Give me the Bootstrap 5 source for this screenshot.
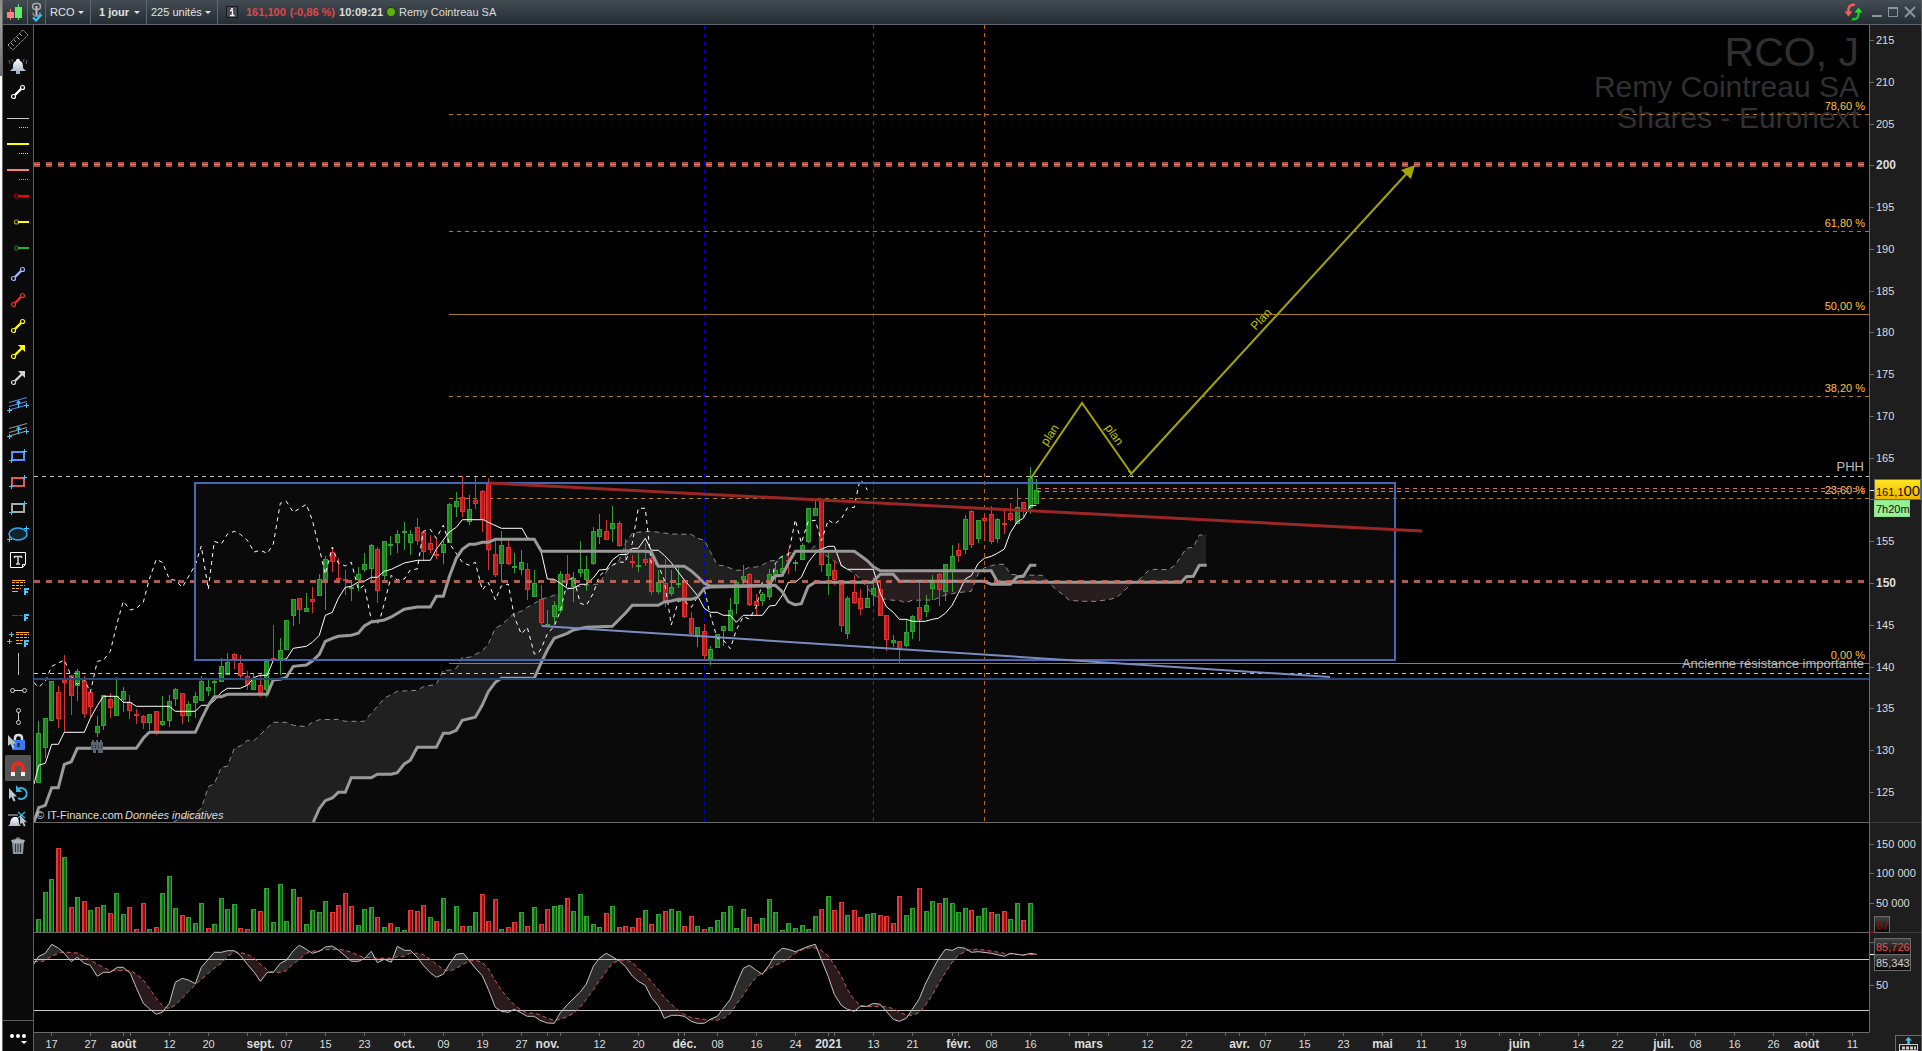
<!DOCTYPE html>
<html lang="fr">
<head>
<meta charset="utf-8">
<meta name="viewport" content="width=device-width, initial-scale=1">
<title>RCO, J - Remy Cointreau SA</title>
<link href="https://cdn.jsdelivr.net/npm/bootstrap@5.3.0/dist/css/bootstrap.min.css" rel="stylesheet">
<style>
  body { background: #fff; color: #dcdcdc; font: 11px/14px "Liberation Sans", Arial, sans-serif; }
  .desk-edge { width: 2px; background: linear-gradient(#8a8a8a, #a0a0a0 20px, #6e6e6e 76px, #fff 76px); }
  .chart-window { background: #000; border-left: 1px solid #666; border-right: 1px solid #5c5c5c; min-width: 0; }
  .title-bar { height: 25px; background: linear-gradient(#434c53, #252d33); border-bottom: 1px solid #5d676d; }
  .title-bar .cell { height: 24px; border-right: 1px solid #5d676d; }
  .style-btn { width: 25px; }
  .link-btn { width: 18px; }
  .title-bar select { appearance: none; background: transparent; border: 0; color: #e2e2e2; font: inherit; padding: 0; outline: 0; }
  .title-bar option { background: #252d33; }
  .drop { padding-left: 4px; padding-right: 6px; }
  .drop::after { content: ""; border: 3px solid transparent; border-top-color: #e2e2e2; border-bottom: 0; }
  .sel-code { width: 28px; }
  .title-bar .sel-unit { width: 35px; font-weight: bold; }
  .sel-range { width: 54px; }
  .quote-down { color: #e04646; }
  .status-dot { width: 8px; height: 8px; background: #5ab40a; box-shadow: 0 0 0 1px #1e3c0a; }
  .plain-btn { background: none; border: 0; padding: 0; line-height: 0; color: inherit; }
  .tool-rail { width: 31px; background: #0a0a0a; border-right: 1px solid #5f5f5f; padding-top: 2px; }
  .tool-rail .plain-btn { width: 28px; height: 26px; margin-left: 1px; }
  .tool-rail .active-tool { background: linear-gradient(#555, #555) center / 26px 26px no-repeat; border-radius: 3px; }
  .tool-rail .rail-foot { border-top: 1px solid #5f5f5f; height: 31px; }
  .pane { border-bottom: 1px solid #6a6a6a; min-width: 0; overflow: hidden; }
  .scale-pane { width: 52px; background: #1e1e1e; border-left: 1px solid #6a6a6a; border-bottom: 1px solid #3c3c3c; }
  .scale-pane.last-pane { border-bottom-color: #1e1e1e; }
  .row-volume { height: 110px; } .row-stoch { height: 100px; } .row-dates { height: 18px; background: #1e1e1e; }
  .row-dates .pages-btn { width: 26px; border-left: 1px solid #6a6a6a; border-top: 1px solid #6a6a6a; height: 16px; margin-top: 2px; }
  svg { display: block; }
  svg text { font-family: "Liberation Sans", Arial, sans-serif; font-size: 11px; fill: #dcdcdc; }
  svg .strong-label { font-size: 12px; font-weight: bold; }
  svg .fib-label { fill: #ffc04a; }
  svg .note-label { font-size: 13px; fill: #bcbcbc; }
  svg .plan-label { fill: #c0c000; font-size: 12px; }
  svg .mark-big { font-size: 41px; fill: #303030; }
  svg .mark-mid { font-size: 30px; fill: #303030; }
  .crisp { shape-rendering: crispEdges; }
</style>
</head>
<body>
<svg width="0" height="0" class="position-absolute" aria-hidden="true">
  <defs>
    <linearGradient id="tagYellow" x2="0" y2="1"><stop stop-color="#ffe61e"/><stop offset="1" stop-color="#f0b400"/></linearGradient>
    <linearGradient id="tagDark" x2="0" y2="1"><stop stop-color="#464646"/><stop offset="1" stop-color="#050505"/></linearGradient>
    <linearGradient id="bellFill" x2="0" y2="1"><stop stop-color="#fff"/><stop offset="1" stop-color="#aebfd0"/></linearGradient>
    <linearGradient id="upBody"><stop stop-color="#2fa02f"/><stop offset="1" stop-color="#0c6e0c"/></linearGradient>
    <linearGradient id="downBody"><stop stop-color="#e03232"/><stop offset="1" stop-color="#960a0a"/></linearGradient>
    <symbol id="plus" viewBox="0 0 5 5"><path d="M2.5 0v5M0 2.5h5" stroke="#3cc8ff"/></symbol>
    <symbol id="i-seg" viewBox="0 0 28 26"><path d="M11 16l6-6" stroke="currentColor" stroke-width="2.4"/><circle cx="9.5" cy="17.5" r="2" fill="none" stroke="currentColor" stroke-width="1.2"/><circle cx="18.5" cy="8.5" r="2" fill="none" stroke="currentColor" stroke-width="1.2"/></symbol>
    <symbol id="i-arrow" viewBox="0 0 28 26"><path d="M11 16l7-7" stroke="currentColor" stroke-width="2.4"/><circle cx="9.5" cy="17.5" r="2" fill="none" stroke="currentColor" stroke-width="1.2"/><path d="M14 6h7v7z" fill="currentColor"/></symbol>
    <symbol id="i-ray" viewBox="0 0 28 26"><path d="M14 13h11" stroke="currentColor" stroke-width="2"/><circle cx="12.5" cy="13" r="2" fill="none" stroke="currentColor" stroke-opacity=".6" stroke-width="1.2"/></symbol>
    <symbol id="i-level" viewBox="0 0 28 26"><path d="M3 13h22" stroke="currentColor" stroke-width="2"/><path d="M15 22.5h9" stroke="currentColor" stroke-dasharray="1 1"/></symbol>
    <symbol id="i-channel" viewBox="0 0 28 26"><path d="M5 11.5L23 6.5M5 15.5L23 10.5M5 19L23 14" stroke="currentColor" stroke-width="1.2"/><use href="#plus" x="3" y="17" width="5" height="5"/><use href="#plus" x="20" y="12" width="5" height="5"/><path d="M14.5 17v-6M12.5 12.5l2-2.5 2 2.5" stroke="#3cc8ff" stroke-width="1.2" fill="none"/></symbol>
    <symbol id="i-rect" viewBox="0 0 28 26"><rect x="8" y="9" width="12" height="8" fill="none" stroke="currentColor" stroke-width="2"/><use href="#plus" x="5" y="15" width="5" height="5"/><use href="#plus" x="18" y="6" width="5" height="5"/></symbol>
    <symbol id="i-fib" viewBox="0 0 28 26"><path d="M8 7.5h13M8 18.5h6" stroke="#ffaa28"/><path d="M8 9.5h13M8 12.5h13M8 15.5h9" stroke="#ffaa28" stroke-dasharray="3 1"/><path d="M21 22v-6h4M21 19h3" fill="none" stroke="#3cc8ff" stroke-width="2"/></symbol>
    <symbol id="cursor" viewBox="0 0 10 14"><path d="M1 0v11l2.5-2 2 4.5 2-1-2-4h3.500z" fill="#bcc4cc"/></symbol>
  </defs>
</svg>

<div class="d-flex vh-100 overflow-hidden">
  <div class="desk-edge flex-shrink-0"></div>
  <main class="chart-window d-flex flex-column flex-fill">

    <header class="title-bar d-flex align-items-center flex-shrink-0">
      <button class="plain-btn cell style-btn" type="button" aria-label="Style du graphique">
        <svg width="24" height="24" viewBox="0 0 24 24"><path d="M7.500 9v11" stroke="#ff7878"/><rect x="4" y="12" width="7" height="6" fill="#ff8282"/><path d="M15.500 4v16" stroke="#5ae65a"/><rect x="12" y="7" width="7" height="11" fill="#64eb64"/></svg>
      </button>
      <button class="plain-btn cell link-btn" type="button" aria-label="Lier les graphiques">
        <svg width="17" height="24" viewBox="0 0 17 24" fill="none"><rect x="4.500" y="3.500" width="8" height="6" rx="3" stroke="#aaa" stroke-width="1.500"/><path d="M8.500 6v10" stroke="#c0c0c0" stroke-width="2"/><path d="M5 12.500c0 5 7 5 7 0" stroke="#8c8c8c" stroke-width="1.500"/><path d="M5 17.500l3 3 5.500-6" stroke="#32c8ff" stroke-width="2"/></svg>
      </button>
      <div class="cell drop d-flex align-items-center"><select class="sel-code" aria-label="Valeur"><option>RCO</option></select></div>
      <div class="cell drop d-flex align-items-center ps-2"><select class="sel-unit" aria-label="Unité de temps"><option>1 jour</option></select></div>
      <div class="cell drop d-flex align-items-center"><select class="sel-range" aria-label="Nombre d'unités"><option>225 unités</option></select></div>
      <button class="plain-btn ms-2" type="button" aria-label="Informations">
        <svg width="12" height="12" viewBox="0 0 12 12"><rect x=".5" y=".5" width="11" height="11" fill="#4a4a55" stroke="#17171c"/><path d="M4 4.500h2.500V9M4 9.500h4.500" stroke="#fff" fill="none" stroke-width="1.300"/><rect x="5" y="2" width="2" height="1.500" fill="#fff"/></svg>
      </button>
      <strong class="quote-down ms-2">161,100</strong>
      <strong class="quote-down ms-1">(-0,86 %)</strong>
      <strong class="ms-1">10:09:21</strong>
      <span class="status-dot rounded-circle mx-1 flex-shrink-0"></span>
      <span>Remy Cointreau SA</span>
      <div class="d-flex align-items-center ms-auto">
        <button class="plain-btn" type="button" aria-label="Actualiser"><svg width="19" height="18" viewBox="0 0 19 18"><path d="M11 2C6 1 4 4 4.500 9" fill="none" stroke="#ff5a5a" stroke-width="2.500"/><path d="M.5 8.500h8l-4 5z" fill="#ff5a5a"/><path d="M8 16c5 1 7-2 6.500-7" fill="none" stroke="#14c81e" stroke-width="2.500"/><path d="M10.500 9.500h8l-4-5z" fill="#28dc32"/></svg></button>
        <button class="plain-btn ms-2" type="button" aria-label="Réduire"><svg width="12" height="12"><path d="M1 10h10" stroke="#8c959b" stroke-width="2"/></svg></button>
        <button class="plain-btn ms-1" type="button" aria-label="Agrandir"><svg width="12" height="12"><path d="M1.500 1.500h9v9h-9z" fill="none" stroke="#8c959b"/><path d="M1 2h10" stroke="#8c959b" stroke-width="2"/></svg></button>
        <button class="plain-btn ms-1 me-1" type="button" aria-label="Fermer"><svg width="14" height="12"><path d="M2 1l10 10M12 1L2 11" stroke="#8c959b" stroke-width="2"/></svg></button>
      </div>
    </header>

    <div class="d-flex flex-fill overflow-hidden">
      <nav class="tool-rail d-flex flex-column flex-shrink-0" id="rail" aria-label="Outils de dessin"></nav>

      <section class="d-flex flex-column flex-fill overflow-hidden">
        <div class="d-flex flex-fill overflow-hidden">
          <div class="pane flex-fill"><svg id="price" width="100%" height="100%" role="img" aria-label="Cours"></svg></div>
          <div class="scale-pane flex-shrink-0"><svg id="priceScale" width="51" height="100%"></svg></div>
        </div>
        <div class="row-volume d-flex flex-shrink-0">
          <div class="pane flex-fill"><svg id="volume" width="100%" height="109" role="img" aria-label="Volume"></svg></div>
          <div class="scale-pane flex-shrink-0"><svg id="volumeScale" width="51" height="110" overflow="visible"></svg></div>
        </div>
        <div class="row-stoch d-flex flex-shrink-0">
          <div class="pane flex-fill"><svg id="stoch" width="100%" height="99" role="img" aria-label="Stochastique"></svg></div>
          <div class="scale-pane last-pane flex-shrink-0"><svg id="stochScale" width="51" height="99"></svg></div>
        </div>
        <div class="row-dates d-flex flex-shrink-0 overflow-hidden">
          <div class="flex-fill overflow-hidden"><svg id="dates" width="100%" height="18"></svg></div>
          <button class="plain-btn pages-btn flex-shrink-0" type="button" aria-label="Pages"><svg width="25" height="15"><path d="M12.500 8V3" stroke="#3cc8ff" stroke-width="2.500"/><path d="M9 4.500L12.500 1 16 4.500z" fill="#3cc8ff"/><rect x="3.500" y="8.500" width="18" height="6" fill="none" stroke="#ccc"/><path d="M6 12h14" stroke="#ccc" stroke-width="3" stroke-dasharray="3 1"/></svg></button>
        </div>
      </section>
    </div>
  </main>
</div>

<script src="https://cdn.jsdelivr.net/npm/bootstrap@5.3.0/dist/js/bootstrap.bundle.min.js"></script>
<script>
/* ---------- drawing tools ---------- */
const use = (id, color) => `<use href="#${id}" width="28" height="26" style="color:${color}"/>`;
const node = (x, y) => `<circle cx="${x}" cy="${y}" r="2" fill="none" stroke="#d2d2d2"/>`;
const tools = [
  ['Règle', '<path d="M4 18L19 3l5 5L9 23z" fill="none" stroke="#aaa" stroke-dasharray="1.500 .7"/><path d="M7 16l2.500 2.500M10 13l2 2M13 10l2.500 2.500M16 7l2 2" stroke="#aaa"/>'],
  ['Alerte', '<path d="M12 8c0-3 4-3 4 0 3 1 3 4 3 7l3 3H6l3-3c0-3 0-6 3-7z" fill="url(#bellFill)"/><rect x="12" y="18" width="4" height="3" fill="#9fb0c2"/><path d="M5 7l1 4M8 6l.5 3M23 7l-1 4M20 6l-.5 3" stroke="#667"/>'],
  ['Segment', use('i-seg', '#fff')],
  ['Niveau blanc', '<path d="M3 13.500h22" stroke="#ccc"/><path d="M15 22.500h9" stroke="#ccc" stroke-dasharray="1 1"/>'],
  ['Niveau jaune', use('i-level', '#ff0')], ['Niveau rose', use('i-level', '#ff8072')],
  ['Demi-droite rouge', use('i-ray', '#f00')], ['Demi-droite jaune', use('i-ray', '#ff0')], ['Demi-droite verte', use('i-ray', '#28b428')],
  ['Segment bleu', use('i-seg', '#a0b9ff')], ['Segment rouge', use('i-seg', '#e03232')], ['Segment jaune', use('i-seg', '#ff0')],
  ['Flèche jaune', use('i-arrow', '#ff0')], ['Flèche grise', use('i-arrow', '#d2d2d2')],
  ['Canal bleu', use('i-channel', '#5a82e6')], ['Canal gris', use('i-channel', '#969696')],
  ['Rectangle bleu', use('i-rect', '#5a8cff')], ['Rectangle rouge', use('i-rect', '#e05a5a')], ['Rectangle gris', use('i-rect', '#aaa')],
  ['Ellipse', '<ellipse cx="14" cy="13" rx="9" ry="6" fill="#14222c" stroke="#32aaf0" stroke-width="1.500"/><use href="#plus" x="3" y="16" width="5" height="5"/><use href="#plus" x="20" y="5" width="5" height="5"/>'],
  ['Texte', '<path d="M6.500 5.500h15v12l-3 3h-12z" fill="none" stroke="#fff"/><path d="M18.500 20.500v-3h3" fill="none" stroke="#fff"/><path d="M10.500 11V9.500h7V11M14 9.500v7M12 17h4" fill="none" stroke="#d2d2d2" stroke-width="1.500"/>'],
  ['Fibonacci', use('i-fib')],
  ['Fibonacci vert', '<path d="M8 16.500h11" stroke="#0a780a" stroke-dasharray="6 1"/><path d="M21 22v-6h4M21 19h3" fill="none" stroke="#3cc8ff" stroke-width="2"/>'],
  ['Extension Fibonacci', '<path d="M12 7.500h13M12 18.500h6" stroke="#ffaa28"/><path d="M12 9.500h13M12 12.500h13M12 15.500h9" stroke="#ffaa28" stroke-dasharray="3 1"/><path d="M21 22v-6h4M21 19h3" fill="none" stroke="#3cc8ff" stroke-width="2"/><use href="#plus" x="5" y="7" width="5" height="5"/><use href="#plus" x="3" y="14" width="5" height="5"/>'],
  ['Droite verticale', '<path d="M14.500 2v22" stroke="#b4b4b4"/>'],
  ['Segment horizontal', '<path d="M10 13.500h9" stroke="#d2d2d2"/>' + node(8.5, 13.5) + node(20.5, 13.5)],
  ['Segment vertical', '<path d="M14.500 9v8" stroke="#d2d2d2"/>' + node(14.5, 7.5) + node(14.5, 19.5)],
  ['Verrouiller', '<path d="M11 12V9c0-4 7-4 7 0v3" fill="none" stroke="#ddd" stroke-width="2.500"/><rect x="8" y="11" width="13" height="10" rx="1" fill="#3c78f0"/><path d="M14.500 14v4" stroke="#123" stroke-width="2"/><use href="#cursor" x="3" y="6" width="10" height="14"/>'],
  ['Aimant', '<path d="M9 19v-6c0-6 10-6 10 0v6" fill="none" stroke="#e62d1e" stroke-width="4"/><path d="M9 17v4M19 17v4" stroke="#eee" stroke-width="4"/>', 'active-tool'],
  ['Annuler', '<path d="M14 8a5.500 5.500 0 1 1 0 9" fill="none" stroke="#32b4dc" stroke-width="2"/><path d="M12 4v7h6z" fill="#32b4dc"/><use href="#cursor" x="4" y="7" width="10" height="14"/>'],
  ['Supprimer les alertes', '<path d="M10 10h3c2 2 2 5 2 7l2 2H4l2-2c0-3 1-6 4-7z" fill="url(#bellFill)"/><path d="M4 8h10" stroke="#ccc"/><path d="M14 5l7 6M21 5l-7 6" stroke="#32b4dc" stroke-width="1.500"/><use href="#cursor" x="15" y="8" width="9" height="12"/>'],
  ['Corbeille', '<path d="M8 9h12l-1 12H9z" fill="#8c949b"/><path d="M11.500 11v8M14 11v8M16.500 11v8" stroke="#333"/><ellipse cx="14" cy="8" rx="7" ry="2" fill="#aab2b9"/><path d="M12 6c0-1.500 4-1.500 4 0" fill="none" stroke="#bbb"/>']
];
document.getElementById('rail').innerHTML = tools.map(([name, art, cls]) =>
  `<button type="button" class="plain-btn ${cls || ''}" aria-label="${name}"><svg width="28" height="26" viewBox="0 0 28 26">${art}</svg></button>`).join('') +
  `<div class="rail-foot mt-auto"><button type="button" class="plain-btn" aria-label="Plus d'outils"><svg width="28" height="30" viewBox="0 0 28 30"><g fill="#fff"><circle cx="8" cy="15" r="2"/><circle cx="14" cy="15" r="2"/><circle cx="20" cy="15" r="2"/><path d="M17 20h6l-3 3z"/></g></svg></button></div>`;

/* ---------- data (sizes in thirds of a pixel) ---------- */
// one candle per session: direction, high, body top, body bottom, low
const candles = `g783 820 970 970,g775 775 863 893,g664 664 784 784,r678 697 776 803,r585 660 670 817,r646 646 709 765,g627 634 677 722,r648 664 763 773,r697 697 742 771,g768 798 818 830,g706 706 797 809,r700 717 745 774,g652 709 769 769,g681 694 721 756,r706 727 754 777,r747 763 769 791,r766 769 788 806,g762 763 788 809,r754 754 816 824,g709 784 794 797,g706 724 784 800,g684 688 718 739,r700 700 769 791,g724 733 769 785,g697 709 730 773,g649 664 724 724,g655 682 694 709,g658 664 670 706,g595 619 667 667,g580 607 646 646,r579 583 598 628,r586 610 649 660,r634 649 675 690,g643 658 691 691,r646 676 699 711,g604 604 690 711,r495 595 601 601,g534 571 597 645,g481 481 571 571,g418 418 469 498,r415 415 451 491,g399 445 457 457,r381 418 427 459,g343 358 409 409,g289 298 360 450,r262 277 307 336,r295 355 360 370,r331 358 363 405,g367 382 388 423,g322 343 360 393,g279 313 331 336,g252 256 328 360,r262 268 394 429,g244 244 349 360,g228 252 255 285,g210 223 250 279,g186 214 220 270,g210 223 250 286,r174 202 244 255,r214 217 277 303,r225 250 271 279,r235 282 285 297,g244 252 280 312,g128 132 250 250,g96 123 141 170,r49 112 157 172,g105 148 185 195,r52 121 131 147,r90 94 181 216,r54 67 269 330,r244 283 345 350,g213 256 313 365,r243 262 311 315,g279 319 325 340,g270 307 330 345,r309 328 391 420,g330 370 410 410,r376 418 488 497,g450 493 496 500,g423 436 472 492,g333 343 454 460,r285 343 361 366,g337 355 382 426,g243 328 339 352,g289 328 360 393,g201 214 312 315,g162 208 231 252,r180 214 240 240,g138 190 207 246,r184 190 258 262,r237 267 270 302,r285 304 309 324,g280 316 321 336,r250 298 308 318,r273 295 395 404,g330 367 396 402,r298 370 426 440,g331 382 402 408,g325 370 375 384,r361 361 471 474,r457 475 523 528,g502 502 530 560,r492 514 588 600,g558 568 597 615,g522 522 563 565,g499 499 513 558,g414 451 512 512,g361 367 432 462,g315 349 361 376,r340 343 435 438,r402 424 437 466,g396 403 423 438,g327 343 411 420,g312 331 351 366,g289 325 340 345,r267 301 307 342,g301 306 309 333,g249 256 299 300,g145 145 246 249,g117 145 168 168,r118 118 314 336,g279 313 348 405,r307 331 360 374,r360 372 498 516,g408 415 521 536,r346 397 428 432,r387 415 447 465,g376 414 443 444,g352 385 404 437,r360 387 467 468,r466 466 539 572,g525 540 548 560,r544 544 566 611,g478 517 557 560,g466 469 515 537,r366 442 479 543,g405 436 455 471,g345 364 386 420,r340 343 389 438,g312 313 395 422,g255 289 337 395,r249 271 287 306,g165 178 269 282,r150 154 254 264,g181 181 236 249,r159 175 183 240,r138 163 246 252,g174 178 236 249,r150 190 194 222,r129 160 179 183,g84 142 191 192,r126 127 146 175,g21 55 145 162,g57 91 131 132`.split(',').map(s => [s[0], ...s.slice(1).split(' ').map(Number)]);
// one volume bar per session: direction and top
const volumes = `g328 g247 g208 r114 g142 r292 g262 r274 g301 r292 g286 r310 g250 g313 r292 r358 r280 g358 r352 g250 g199 g295 r316 g322 g340 g280 r355 g343 g265 g298 g283 r355 r358 g298 r304 g235 g337 g223 g334 g238 r262 g343 g301 g307 g274 r307 r286 r250 r289 g346 g298 g292 r322 g352 r340 g352 g361 r301 r304 r286 g322 r334 g265 g358 g289 r349 g349 g307 r253 r334 r268 g358 r352 r337 g307 r349 g292 r343 r298 g289 g286 r265 g304 g253 g319 g343 g352 r310 g289 r352 r349 r352 r325 g301 r343 g313 r304 g298 g304 r349 r319 g349 r358 g352 g331 g307 g289 g355 g298 r322 r343 g325 g268 g307 g361 g340 g355 g346 g358 g319 r298 g259 r301 r277 g316 r301 r322 g313 g310 r316 r319 r340 r259 g316 g295 r235 g304 g274 r280 g265 g280 g307 g295 r301 g319 g295 r307 g313 r304 g328 g280 r331 g280`.split(' ');
// curves come in runs; every run has its own origin in pixels
const join = (...runs) => runs.flatMap(([x0, y0, s]) => s.trim().split(/\s+/).map(p => { const [x, y] = p.split(',').map(Number); return [x0 + x / 3, y0 + y / 3]; }));
const A = s => [-4, 435, s], B = s => [406, 435, s], C = s => [756, 355, s];
const tenkan = join(
  A('12,972 26,916 46,910 65,853 85,853 103,817 163,817 181,775 202,737 220,709 262,709 280,727 301,727 319,739 418,739 436,754 496,754 514,736 535,736 553,722 574,697 592,685 631,685 652,676 673,652 691,646 712,646 730,601 769,597 790,565 829,559 847,547 868,526 886,466 907,457 925,415 946,382 964,379 985,366 1003,364 1024,352 1042,352 1063,334 1084,328 1123,309 1162,301 1201,301 1219,268'),
  B('28,216 49,202 67,179 130,179 145,187 184,205 246,205 262,234 283,238 304,277 322,357 343,358 361,370 382,385 400,385 421,373 439,373 460,354 478,330 499,328 517,300 538,284 562,283 577,265 595,265 616,235 634,271 655,271 673,286 694,308 733,360 754,384 772,406 793,445 811,457 832,457 850,466 871,466 889,487 910,466 967,466 988,438 1006,436 1027,406 1045,367 1066,367 1084,352 1105,307 1126,280 1144,268'),
  C('115,499 133,499 154,556 172,568 250,568 271,640 289,680 310,697 328,718 349,718 367,724 406,724 427,718 445,715 466,700 487,675 505,640 526,597 544,587 565,550 583,535 604,529 622,520 643,507 661,458 682,425 700,415 721,377 739,376'));
const kijun = join(
  A('12,1086 26,1043 46,1036 65,983 85,983 103,913 124,905 142,865 319,865 340,835 358,817 496,817 514,778 535,736 553,710 574,710 592,703 712,703 730,660 751,658 769,652 790,619 829,615 847,603 868,583 886,544 907,535 925,529 964,526 985,520 1003,498 1024,486 1063,480 1084,471 1123,448 1162,441 1201,441 1219,409'),
  B('10,409 28,350 49,295 67,268 88,253 106,253 127,247 145,247 166,238 283,238 304,274 616,274 634,276 655,319 733,319 754,333 772,349 793,370 811,378 850,378 1006,376 1027,395 1045,425 1060,432'),
  C('16,674 34,671 54,620 75,607 247,607 271,583 310,583 328,604 583,604 604,613 661,613 682,590 700,589 721,556 739,556'));
const spanB = join(
  A('850,1086 868,1046 886,1022 907,1014 925,997 946,997 964,953 1024,953 1042,943 1084,943 1102,938 1123,912 1141,901 1162,862 1219,862'),
  B('10,820 28,820 49,811 67,781 106,772 127,735 145,695 166,667 184,655 283,655 304,607 322,570 343,535 382,520 400,510 439,502 517,499 538,478 556,460 577,436 655,436 673,426 694,423 715,418 754,418 772,412 793,385 811,381 985,378 1006,348 1027,346 1045,310'),
  C('16,514 193,514 214,529 232,542 250,560 271,572 604,572 622,605 640,607 1174,607 1189,590 1210,589 1228,556 1250,556'));
const spanA = join(
  A('430,1086 475,1064 496,1060 514,1045 535,980 553,971 574,922 592,919 613,865 631,858 652,841 673,841 691,824 712,803 730,787 769,787 790,796 829,800 847,787 868,779 925,778 946,784 1003,784 1024,760 1063,715 1102,694 1162,691 1180,680 1219,673'),
  B('10,631 28,631 49,625 67,592 88,592 127,573 145,552 166,505 184,495 223,460 244,454 262,442 304,418 343,406 382,388 400,382 439,375 478,372 499,335 517,316 538,300 556,250 577,220 600,216 634,214 694,222 754,223 772,235 793,240 811,275 832,315 850,317 889,331 910,330 928,322 949,321 967,315 988,303 1006,301 1045,280 1066,274'),
  C('57,513 75,497 94,516 120,535 150,555 193,580 214,600 232,625 250,645 271,655 300,660 330,662 345,668 367,661 430,660 466,645 500,638 544,634 565,580 583,563 604,557 622,553 643,553 661,583 682,585 758,586 775,606 797,628 820,645 838,661 880,664 920,664 960,658 980,652 1000,635 1025,610 1050,597 1075,572 1095,568 1135,569 1155,556 1189,505 1210,502 1228,465 1250,465'));
const chikou = join(
  A('12,668 26,682 46,664 65,619 103,600 124,649 142,673 163,658 181,697 202,604 220,601 241,574 262,487 280,424 301,450 319,445 340,427 358,358 379,298 397,307 418,357 436,361 457,382 496,315 514,258 535,388 553,244 574,252 592,223 613,214 631,223 652,241 673,276 691,271 712,280 730,252 751,130 769,124 790,157 829,133 847,180 868,265 886,343 907,261 925,309 946,318 964,307 985,388 1003,376 1024,480 1037,493 1048,485 1063,430 1084,346 1102,360 1123,357 1141,330 1162,327 1180,214 1201,208 1219,235'),
  B('10,196 28,250 49,280 67,307 88,316 106,307 127,390 145,367 166,420 184,378 205,372 223,470 244,522 262,502 283,582 295,580 304,565 322,522 343,498 361,454 382,365 400,350 421,430 439,436 460,400 478,348 499,330 517,316 538,306 556,307 577,250 595,145 616,145 634,310 655,316 673,360 694,495 715,423 733,423 754,442 772,412 793,388 811,465 832,535 850,540 871,566 889,510 910,470 928,477 949,440 967,367 988,390 1006,310 1027,288 1045,285 1066,179 1084,249 1105,184 1126,181 1144,243'),
  C('115,420 133,432 154,417 172,384 193,382 205,320 211,300 220,308 232,330'));
const D = s => [-4, -123, s], E = s => [506, -123, s];
const percentK = join(
  D('12,462 26,439 46,430 65,403 85,414 103,430 124,455 142,442 163,460 181,466 202,499 220,487 241,487 262,472 280,472 301,490 319,533 340,580 358,596 379,613 397,607 418,580 436,517 457,505 475,510 496,521 514,472 535,448 553,427 574,427 592,422 613,422 631,436 652,463 673,487 691,514 712,487 730,487 751,460 769,451 790,422 808,406 829,418 847,430 868,424 886,411 907,408 925,420 946,438 964,454 985,454 1003,446 1024,424 1042,458 1063,448 1084,457 1102,409 1123,421 1141,421 1162,442 1180,466 1201,488 1219,502 1240,493 1258,463 1279,433 1300,430 1315,448 1336,474 1357,497 1375,538 1396,592 1414,604 1435,607 1453,598 1474,609 1492,619 1513,619 1530,631'),
  E('22,639 43,640 61,608 82,584 121,546 139,522 160,469 178,445 199,430 217,440 238,453 256,469 277,498 295,514 316,526 334,562 355,587 373,625 394,616 415,616 433,619 454,634 472,640 493,640 511,628 532,619 550,595 571,568 589,523 610,475 628,466 649,481 667,493 688,465 706,433 727,415 745,418 766,425 784,418 805,409 826,403 844,448 865,500 883,553 904,586 922,598 943,604 961,589 982,589 1000,580 1021,583 1039,604 1060,628 1078,634 1099,625 1117,598 1138,566 1156,522 1177,481 1195,448 1216,418 1237,421 1255,412 1276,415 1294,427 1315,425 1354,430 1393,439 1411,430 1450,436 1471,430 1490,433'));
const percentD = join(
  D('12,455 40,454 65,439 85,430 103,426 142,429 163,440 181,450 202,463 241,482 301,482 319,492 340,510 358,535 379,565 397,586 410,594 420,595 436,585 457,565 475,545 496,525 514,508 535,490 553,475 574,460 592,440 613,425 631,428 652,433 673,445 691,463 712,480 730,487 751,487 769,482 790,462 808,448 829,430 847,424 886,419 925,418 946,421 964,427 985,436 1003,443 1024,443 1042,445 1084,445 1102,440 1123,439 1141,430 1162,430 1180,434 1201,448 1219,463 1240,478 1258,484 1279,475 1300,463 1318,453 1336,451 1357,457 1375,476 1396,512 1414,540 1435,565 1453,585 1474,601 1492,609 1513,610 1530,614'),
  E('22,625 43,631 61,628 82,620 100,610 121,590 139,568 160,540 178,512 199,485 217,460 238,451 256,450 277,457 295,476 316,493 334,515 355,538 373,562 394,583 415,600 433,613 454,623 493,628 532,631 550,625 571,610 589,583 610,556 628,527 649,502 667,488 688,476 706,466 727,457 745,445 766,430 784,420 805,414 826,414 844,421 865,438 883,465 904,498 922,538 943,570 961,586 982,590 1021,590 1039,590 1060,596 1078,606 1099,615 1117,616 1138,608 1156,586 1177,556 1195,522 1216,488 1237,457 1255,436 1276,424 1294,418 1315,418 1354,423 1393,430 1411,432 1450,434 1490,433'));
const dateTicks = '51:17,90:27,123:*août,130:,169:12,208:20,247:,260:*sept.,286:07,325:15,364:23,404:*oct.,443:09,482:19,521:27,547:*nov.,560:,599:12,638:20,678:,684:*déc.,717:08,756:16,795:24,828:*2021,834:,873:13,912:21,952:,958:*févr.,991:08,1030:16,1069:,1088:*mars,1108:,1147:12,1186:22,1225:,1239:*avr.,1265:07,1304:15,1343:23,1382:*mai,1421:11,1460:19,1499:,1519:*juin,1539:,1578:14,1617:22,1656:,1663:*juil.,1695:08,1734:16,1773:26,1806:*août,1813:,1852:11'.split(',');

/* ---------- drawing helpers ---------- */
const barX = i => Math.round(4.1 + 6.525 * i);
const path = (pts, attrs) => `<polyline fill="none" points="${pts.map(p => p.map(n => n.toFixed(1)).join()).join(' ')}" ${attrs}/>`;
const at = (pts, x) => { let k = 1; while (k < pts.length - 1 && pts[k][0] < x) k++; const [a, b] = [pts[k - 1], pts[k]]; return a[1] + (b[1] - a[1]) * (x - a[0]) / (b[0] - a[0]); };
const line = (x1, y1, x2, y2, attrs) => `<line class="crisp" x1="${x1}" y1="${y1}" x2="${x2}" y2="${y2}" ${attrs}/>`;
// fills the band between two curves, one colour for each side
function band(up, low, x1, x2, colorUp, colorDown) {
  let out = '', top = [], bottom = [], side = null;
  const flush = () => { if (top.length > 1) out += `<polygon points="${top.concat(bottom.reverse()).join(' ')}" fill="${side ? colorUp : colorDown}"/>`; };
  for (let x = x1; x <= x2; x++) {
    const a = at(up, x), b = at(low, x), s = a < b, pa = x + ',' + a.toFixed(1), pb = x + ',' + b.toFixed(1);
    top.push(pa); bottom.push(pb);
    if (side !== null && s !== side) { flush(); top = [pa]; bottom = [pb]; }
    side = s;
  }
  flush();
  return out;
}
const scaleLabel = (y, t, strong) => line(0, y, 4, y, 'stroke="#6a6a6a"') + `<text x="6" y="${Math.round(y + 3.5)}" ${strong ? 'class="strong-label"' : ''}>${t}</text>`;

function drawPrice(w) {
  let s = `<text class="mark-big" x="${w - 10}" y="41" text-anchor="end">RCO, J</text><text class="mark-mid" x="${w - 10}" y="72" text-anchor="end">Remy Cointreau SA</text><text class="mark-mid" x="${w - 10}" y="103" text-anchor="end">Shares - Euronext</text>`;
  // cloud: below x = 279 its lower edge is under the pane
  s += band(spanA, [[100, 797], [279, 797], ...spanB], 140, 1172, '#171717', '#201517');
  s += '<rect x="161" y="458" width="1200" height="177" fill="#fff" fill-opacity=".04"/>' + `<rect y="654" width="${w}" height="143" fill="#fff" fill-opacity=".04"/>`;
  s += line(670.5, 0, 670.5, 797, 'stroke="#0000d2" stroke-dasharray="4 4"') + line(839.5, 0, 839.5, 797, 'stroke="#0a640a" stroke-dasharray="4 4"') + line(950.5, 0, 950.5, 797, 'stroke="#c8640f" stroke-dasharray="4 4"');
  for (const [y, t, solid] of [[89, '78,60 %'], [206, '61,80 %'], [289, '50,00 %', 1], [371, '38,20 %'], [473, '23,60 %'], [638, '0,00 %', 1]])
    s += line(415, y + .5, w, y + .5, `stroke="#aa7d23" ${solid ? '' : 'stroke-dasharray="4 4"'}`) + `<text class="fib-label" x="${w - 4}" y="${y - 4}" text-anchor="end">${t}</text>`;
  s += line(0, 139.5, w, 139.5, 'stroke="#a0503f" stroke-width="5" stroke-dasharray="6 6"') + line(0, 139.5, w, 139.5, 'stroke="#e67864" stroke-dasharray="6 6"');
  s += path(spanA, 'stroke="#8c8c8c" stroke-dasharray="5 4"');
  candles.forEach(([dir, h, t, b, l], i) => {
    const x = barX(i), y = v => Math.round(435 + v / 3), up = dir === 'g', c = up ? '#32a032' : '#dc3232';
    s += line(x + .5, y(h), x + .5, y(l), `stroke="${c}"`) + `<rect class="crisp" x="${x - 1.5}" y="${y(t) + .5}" width="4" height="${Math.max(1, y(b) - y(t) - 1)}" fill="url(#${up ? 'upBody' : 'downBody'})" stroke="${c}"/>`;
  });
  s += path(chikou, 'stroke="#fff" stroke-dasharray="4 4"') + path(tenkan, 'stroke="#fff"');
  s += path(spanB, 'stroke="#999" stroke-width="3"') + path(kijun, 'stroke="#999" stroke-width="3"');
  s += line(0, 556.5, w, 556.5, 'stroke="#c86e5f" stroke-opacity=".85" stroke-width="3" stroke-dasharray="6 6"');
  s += line(0, 451.5, w, 451.5, 'stroke="#c8c8c8" stroke-dasharray="4 4"') + line(0, 648.5, w, 648.5, 'stroke="#c8c8c8" stroke-dasharray="4 4"');
  s += line(1003, 463.5, w, 463.5, 'stroke="#e06464" stroke-dasharray="4 4"') + line(1003, 466.5, w, 466.5, 'stroke="#50c850" stroke-dasharray="4 4"');
  s += '<rect class="crisp" x="161" y="458" width="1200" height="177" fill="none" stroke="#4668b4" stroke-width="2"/>' + line(0, 654, w, 654, 'stroke="#2d4678" stroke-width="2"');
  s += '<path d="M455 458L1388 506" stroke="#9b2626" stroke-width="3"/><path d="M508 601L1296 652" stroke="#7b8cc0" stroke-width="2"/>';
  s += '<g stroke="#a5a500" stroke-width="2" fill="none"><path d="M997 453L1048 378 1097 448"/><path d="M1097 449L1374 147"/><path d="M1094 452l6-6M1094 446l6 6" stroke-width="1"/></g><path d="M1381 140l-4 14-10-9z" fill="#a5a500"/>';
  for (const [x, y, a, t] of [[1019, 412, -56, 'plan'], [1077, 412, 55, 'plan'], [1230, 297, -47, 'Plan']]) s += `<text class="plan-label" text-anchor="middle" transform="translate(${x} ${y}) rotate(${a})">${t}</text>`;
  s += '<g fill="#5a646e"><path d="M57 717h12v8H57z"/><path d="M58 715h2v2h-2zM62 715h2v2h-2zM66 715h2v2h-2zM59 725h3v3h-3zM64 725h5v3h-5z"/></g><path d="M58 720.500h10M58 722.500h10" stroke="#222" stroke-dasharray="1 2"/>';
  s += `<text class="note-label" x="${w - 5}" y="446" text-anchor="end">PHH</text><text class="note-label" x="${w - 5}" y="643" text-anchor="end">Ancienne résistance importante</text>`;
  s += '<text x="2" y="794">© IT-Finance.com</text><text x="91" y="794" font-style="italic">Données indicatives</text>';
  return s;
}
function drawVolume() {
  return volumes.map((v, i) => {
    const x = barX(i) - 2, y = Math.round(v.slice(1) / 3) - 13, up = v[0] === 'g';
    return `<g class="crisp"><rect x="${x}" y="${y}" width="5" height="${109 - y}" fill="${up ? '#32a032' : '#dc3c3c'}"/><rect x="${x + 2}" y="${y + 1}" width="2" height="${109 - y}" fill="${up ? '#0f640f' : '#960f0f'}"/></g>`;
  }).join('');
}
function drawStoch(w) {
  return band(percentK, percentD, 0, 1002, '#2b2b2b', '#2b1a1b') + line(0, 26.5, w, 26.5, 'stroke="#c8c8c8"') + line(0, 77.5, w, 77.5, 'stroke="#c8c8c8"') +
    path(percentD, 'stroke="#d25a5a" stroke-dasharray="4 3"') + path(percentK, 'stroke="#c3c3c3"');
}
const put = (id, html) => document.getElementById(id).innerHTML = html;
function drawAll() {
  const w = document.getElementById('price').clientWidth;
  put('price', drawPrice(w)); put('volume', drawVolume()); put('stoch', drawStoch(w));
  put('dates', dateTicks.map(d => { const [x, t] = d.split(':'), b = t[0] === '*', px = x - 34 + .5; return line(px, 0, px, 3, 'stroke="#6a6a6a"') + `<text x="${px}" y="15" text-anchor="middle" ${b ? 'class="strong-label"' : ''}>${t.replace('*', '')}</text>`; }).join(''));
  let s = '';
  for (let p = 215, n = 0; p >= 125; p -= 5, n++) if (p !== 160) s += scaleLabel(Math.round(15 + 41.78 * n) + .5, p, p % 50 === 0);
  s += line(0, 465.5, 4, 465.5, 'stroke="#fff"') + line(0, 474.5, 4, 474.5, 'stroke="#6a6a6a"');
  s += '<rect x="4.500" y="454.500" width="46" height="20" fill="url(#tagYellow)" stroke="#6a6a6a"/><text x="6" y="471" style="fill:#111">161,1<tspan font-size="15">00</tspan></text><rect x="4.500" y="475.500" width="35" height="16" fill="#96f096" stroke="#8ce08c"/><text x="6" y="488" style="fill:#111">7h20m</text>';
  put('priceScale', s);
  put('volumeScale', scaleLabel(21.5, '150 000') + scaleLabel(50.5, '100 000') + scaleLabel(80.5, '50 000') + line(0, 109.5, 4, 109.5, 'stroke="#a01414"') + '<rect x="4.500" y="93.500" width="15" height="16" fill="url(#tagDark)" stroke="#6a6a6a"/><text x="6" y="106" style="fill:#a00">67</text>');
  put('stochScale', line(0, 9.5, 4, 9.5, 'stroke="#6a6a6a"') + line(0, 21.5, 4, 21.5, 'stroke="#fff"') + scaleLabel(52.5, '50') +
    '<rect x="4.500" y="5.500" width="36" height="16" fill="url(#tagDark)" stroke="#6a6a6a"/><rect x="4.500" y="21.500" width="36" height="16" fill="url(#tagDark)" stroke="#6a6a6a"/><text x="6" y="18" style="fill:#e65050">85,726</text><text x="6" y="34" style="fill:#ccc">85,343</text>');
}
drawAll();
addEventListener('resize', drawAll);
</script>
</body>
</html>
